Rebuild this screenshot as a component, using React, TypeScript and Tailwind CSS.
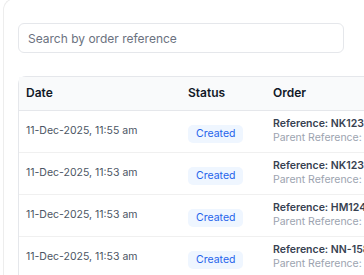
import React from "react";

const orders = [
  { date: "11-Dec-2025, 11:55 am", ref: "NK12395", parent: "NK12390" },
  { date: "11-Dec-2025, 11:53 am", ref: "NK12394", parent: "NK12390" },
  { date: "11-Dec-2025, 11:53 am", ref: "HM12476", parent: "HM12470" },
  { date: "11-Dec-2025, 11:53 am", ref: "NN-15822", parent: "NN-15820" },
];

export default function App() {
  return (
    <div className="w-[364px] h-[275px] overflow-hidden bg-white font-['Inter',sans-serif]">
      <div className="ml-[3px] -mt-[2px] h-[290px] rounded-tl-xl border-l border-t border-[#ededed] pl-[14px] pt-[24px]">
        <input
          className="block w-[326px] h-[30px] rounded-md border border-[#e5e7eb] px-[9px] text-[12px] text-gray-700 placeholder:text-[#6b7280] outline-none"
          placeholder="Search by order reference"
        />
        <div className="mt-[23px] w-[620px] rounded-tl-lg border-l border-t border-[#e5e7eb]">
          <table className="w-full border-collapse text-left">
            <thead>
              <tr className="h-[33px] bg-[#f9fafb] border-b border-[#e5e7eb]">
                <th className="w-[162px] pl-[7px] text-[12px] font-semibold text-[#111827]">Date</th>
                <th className="w-[85px] pl-[7px] text-[12px] font-semibold text-[#111827]">Status</th>
                <th className="pl-[7px] text-[12px] font-semibold text-[#111827]">Order</th>
              </tr>
            </thead>
            <tbody>
              {orders.map((o, i) => (
                <tr key={i} className="h-[42px] border-b border-[#f0f0f0]">
                  <td className="pl-[7px] text-[10.5px] text-[#4b5563]">{o.date}</td>
                  <td className="pl-[7px]">
                    <span className="inline-flex h-[18px] items-center rounded-[5px] bg-[#eff6ff] px-[8px] text-[10.5px] text-[#2563eb]">
                      Created
                    </span>
                  </td>
                  <td className="pl-[7px] leading-[14px]">
                    <div className="text-[10.5px] font-semibold text-[#374151] whitespace-nowrap">Reference: {o.ref}</div>
                    <div className="text-[10.5px] text-[#9ca3af] whitespace-nowrap">Parent Reference: {o.parent}</div>
                  </td>
                </tr>
              ))}
            </tbody>
          </table>
        </div>
      </div>
    </div>
  );
}
